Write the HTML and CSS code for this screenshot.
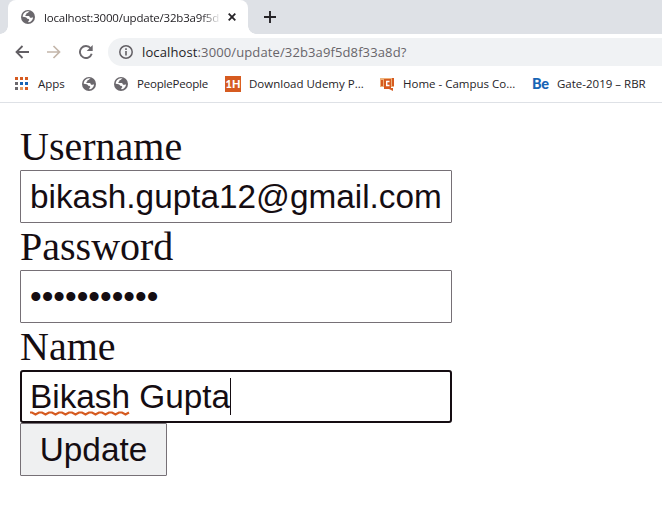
FILE: index.html
```html
<!DOCTYPE html>
<html lang="en">
<head>
<meta charset="utf-8">
<title>Update</title>
<link rel="stylesheet" href="styles.css">
</head>
<body>
<svg class="defs" aria-hidden="true">
  <symbol id="globe" viewBox="0 0 14 14">
    <circle cx="7" cy="7" r="7" fill="#6b686d"/>
    <path d="M8.6 1.500C7.200 2 6.900 3 5.700 3.200c-.6.3-.1 1.100-.9 1.500-.8.3-.6 1.200.2 1.300h2.800c1 .3.6 1.400 1.400 1.700.8.2 1.300-.3 2.900-.3-.2 2.400-2.300 4.700-4.800 4.900V10.900c.9-.2 1.200-.8.8-1.500-.5-.7-1.700-.2-2-.9-.4-1-2-1.500-4.400-1.700C1.800 4 3.900 1.600 6.900 1.300z" fill="#fff"/>
    <path d="M8 3.500c.8-1.500 2.300-1 3 .2.6.8.3 1.700-.8 1.700C9 5.500 8 4.700 8 3.500z" fill="#6b686d"/>
  </symbol>
</svg>
<div class="tabstrip">
  <div class="tab">
    <svg class="globe"><use href="#globe"/></svg>
    <span class="tab-title">localhost:3000/update/32b3a9f5d</span>
    <svg class="close" viewBox="0 0 8 8"><path d="M.7.7l6.600 6.600M7.300.7L.7 7.300" stroke="#252327" stroke-width="1.800"/></svg>
  </div>
  <svg class="plus" viewBox="0 0 12 12"><path d="M6 0v12M0 6h12" stroke="#252327" stroke-width="1.900"/></svg>
</div>
<div class="toolbar">
  <svg class="arrow" viewBox="0 0 14 14"><path d="M14 7H1.500M7.500 1L1.500 7l6 6" fill="none" stroke="#625f64" stroke-width="1.800"/></svg>
  <svg class="arrow forward" viewBox="0 0 14 14"><path d="M0 7h12.500M6.500 1l6 6-6 6" fill="none" stroke="#c4b6aa" stroke-width="1.700"/></svg>
  <svg class="reload" viewBox="0 0 14 14"><path d="M11.700 3.300A6 6 0 1 0 12.700 8.700" fill="none" stroke="#6b686d" stroke-width="1.900"/><path d="M13.700 0v6H7.700z" fill="#6b686d"/></svg>
  <div class="omnibox">
    <svg class="info" viewBox="0 0 14 14"><circle cx="7" cy="7" r="6.200" fill="none" stroke="#625f64" stroke-width="1.500"/><path d="M7 6v4.500M7 3.300v1.600" stroke="#625f64" stroke-width="1.600"/></svg>
    <span class="url"><b>localhost</b>:3000/update/32b3a9f5d8f33a8d?</span>
  </div>
</div>
<div class="bookmarks">
  <svg class="apps" viewBox="0 0 13 13">
    <path d="M0 0h3v3H0zM5 0h3v3H5zM10 0h3v3h-3zM10 10h3v3h-3z" fill="#d65b20"/>
    <path d="M5 5h3v3H5zM10 5h3v3h-3z" fill="#1764b5"/>
    <path d="M0 5h3v3H0zM0 10h3v3H0z" fill="#6b686d"/>
    <path d="M5 10h3v3H5z" fill="#e49b61"/>
  </svg>
  <span class="t-apps">Apps</span>
  <svg class="globe solo"><use href="#globe"/></svg>
  <svg class="globe"><use href="#globe"/></svg>
  <span class="t-people">PeoplePeople</span>
  <span class="onehack">1H</span>
  <span class="t-udemy">Download Udemy P...</span>
  <svg class="campus" viewBox="0 0 16 14"><path d="M1 1h14v9H1z" fill="#eeb17a"/><path d="M2 3h2v6H2zM13 1h2v8h-2zM5 2h7v9h2v3l-4-2H5z" fill="#d65b20"/><path d="M10.500 4.500H7.700v4h2.800" fill="none" stroke="#fff" stroke-width="1.400"/></svg>
  <span class="t-campus">Home - Campus Co...</span>
  <span class="be">Be</span>
  <span class="t-gate">Gate-2019 – RBR</span>
</div>
<form class="page">
  <label>Username</label>
  <div class="field">bikash.gupta12@gmail.com</div>
  <label>Password</label>
  <div class="field">•••••••••••</div>
  <label>Name</label>
  <div class="field focused"><span class="misspelt">Bikash<svg class="squiggle" viewBox="0 0 100 5"><path d="M0 1.500 L2 1.500 L5.500 3.500 L9 1.500 L12 1.500 L15.500 3.500 L19 1.500 L22 1.500 L25.500 3.500 L29 1.500 L32 1.500 L35.500 3.500 L39 1.500 L42 1.500 L45.500 3.500 L49 1.500 L52 1.500 L55.500 3.500 L59 1.500 L62 1.500 L65.500 3.500 L69 1.500 L72 1.500 L75.500 3.500 L79 1.500 L82 1.500 L85.500 3.500 L89 1.500 L92 1.500 L95.500 3.500 L99 1.500" fill="none" stroke="#d65b20" stroke-width="2.200"/></svg></span>&nbsp;Gupta<i class="caret"></i></div>
  <button type="button">Update</button>
</form>
</body>
</html>
```
FILE: styles.css
```css
* { box-sizing: border-box; }
body { margin: 0; height: 512px; overflow: hidden; background: #fff; font-family: "Open Sans", "Noto Sans", sans-serif; color: #252327; }
svg { display: block; flex: none; }
.defs { position: absolute; width: 0; height: 0; }
.tabstrip { display: flex; height: 34px; background: #dee1e6; }
.tab { position: relative; display: flex; align-items: center; width: 240px; height: 34px; margin-left: 8px; padding-left: 13px; border-radius: 8px 8px 0 0; background: #fff; }
.tab::before, .tab::after { content: ""; position: absolute; bottom: 0; width: 8px; height: 8px; }
.tab::before { left: -8px; background: radial-gradient(circle at 0 0, transparent 7.5px, #fff 8px); }
.tab::after { right: -8px; background: radial-gradient(circle at 100% 0, transparent 7.5px, #fff 8px); }
.globe { width: 14px; height: 14px; }
.tab-title { width: 175px; margin-left: 9px; white-space: nowrap; font-size: 11.5px; letter-spacing: -.2px; -webkit-mask-image: linear-gradient(to right, #000 157px, transparent 177px); mask-image: linear-gradient(to right, #000 157px, transparent 177px); }
.close { width: 8px; height: 8px; margin-left: 9px; }
.plus { width: 12px; height: 12px; margin: 11px 0 0 16px; }
.toolbar { display: flex; align-items: center; height: 36px; padding-left: 15px; }
.arrow { width: 14px; height: 14px; }
.forward { margin-left: 18px; }
.reload { width: 14px; height: 14px; margin-left: 18px; }
.omnibox { display: flex; align-items: center; flex: 1; height: 28px; margin-left: 15px; padding-left: 11px; border-radius: 14px 0 0 14px; background: #f0f2f4; }
.info { width: 14px; height: 14px; }
.url { margin-left: 9px; white-space: nowrap; font-size: 13px; letter-spacing: .12px; color: #68656a; }
.url b { font-weight: 400; color: #252327; }
.bookmarks { display: flex; align-items: center; height: 33px; padding: 0 0 5px 15px; border-bottom: 1px solid #dee1e6; white-space: nowrap; font-size: 11.5px; }
.apps { width: 13px; height: 13px; margin-right: 10px; }
.solo { margin-right: 18px; }
.t-apps { width: 44px; }
.t-people { width: 88px; margin-left: 9px; letter-spacing: -.2px; }
.onehack { width: 16px; height: 16px; background: #d65b20; color: #fff; font: 900 11px/16px Lato, sans-serif; text-align: center; }
.t-udemy { width: 130px; margin-left: 8px; }
.campus { width: 16px; height: 14px; }
.t-campus { width: 129px; margin-left: 8px; }
.be { width: 17px; color: #1764b5; font: 900 14.5px/16px Lato, sans-serif; letter-spacing: -.3px; }
.t-gate { margin-left: 8px; }
.page { display: flex; flex-direction: column; align-items: flex-start; padding: 23px 20px 0; color: #150d12; }
label { height: 44px; font: 40px/41px "Liberation Serif", serif; }
.field { width: 432px; height: 53px; margin-bottom: 3px; padding-left: 9px; border: 1px solid #767076; border-radius: 1px; font: 33.333px/52px "Liberation Sans", sans-serif; white-space: nowrap; }
.focused { margin-bottom: 0; padding-left: 8px; border: 2px solid #150d12; border-radius: 3px; line-height: 50px; }
.misspelt { position: relative; }
.squiggle { position: absolute; left: 0; bottom: -1px; width: 100px; height: 5px; }
.caret { display: inline-block; width: 1px; height: 37px; vertical-align: -7px; background: #150d12; }
button { width: 147px; height: 53px; padding: 0; border: 1px solid #767076; border-radius: 1px; background: #eff0f1; color: #150d12; font: 33.333px/51px "Liberation Sans", sans-serif; }
```
